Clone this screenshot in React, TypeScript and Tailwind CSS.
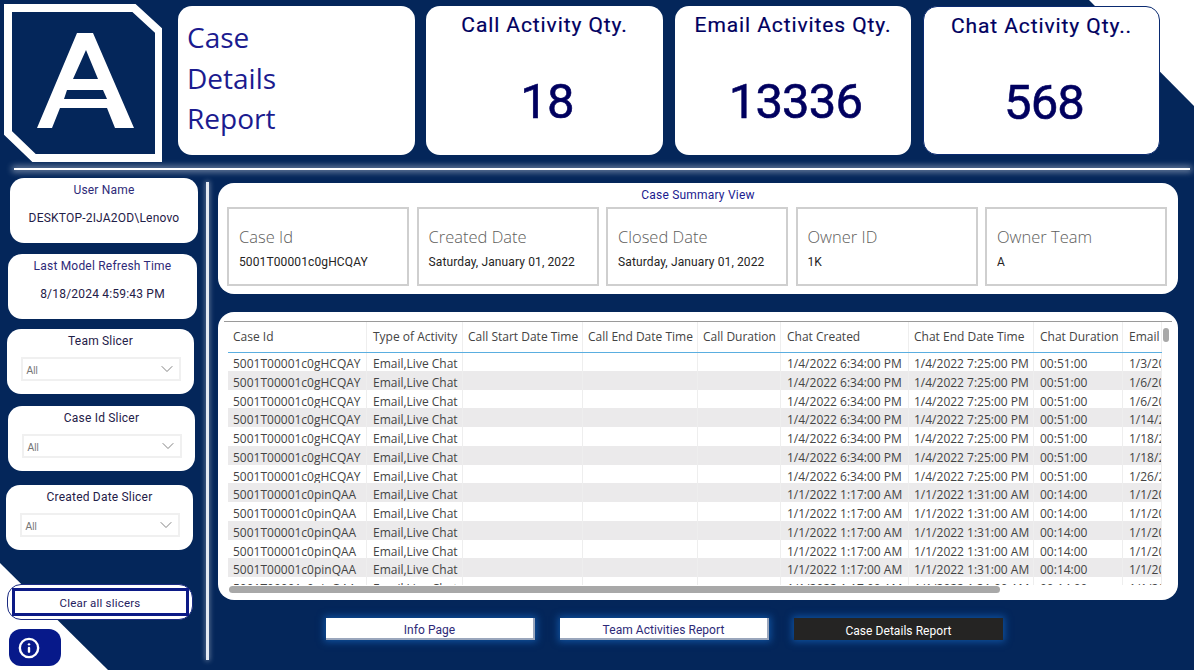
import { ChevronDown, Info } from 'lucide-react'

const din = "[font-family:Roboto,'Liberation_Sans',sans-serif]"
const seg = "[font-family:'Open_Sans','Noto_Sans',sans-serif]"

const columns = [
  { name: 'Case Id', w: 'w-[139px]', pl: 'pl-[5px]' },
  { name: 'Type of Activity', w: 'w-[96px]', pl: 'pl-[6px]' },
  { name: 'Call Start Date Time', w: 'w-[120px]', pl: 'pl-[5px]' },
  { name: 'Call End Date Time', w: 'w-[115px]', pl: 'pl-[5px]' },
  { name: 'Call Duration', w: 'w-[83px]', pl: 'pl-[5px]' },
  { name: 'Chat Created', w: 'w-[128px]', pl: 'pl-[6px]' },
  { name: 'Chat End Date Time', w: 'w-[125px]', pl: 'pl-[5px]' },
  { name: 'Chat Duration', w: 'w-[89px]', pl: 'pl-[6px]' },
  { name: 'Email', w: 'w-[39px]', pl: 'pl-[6px]' },
]

const first = ['1/3/2022', '1/6/2022', '1/6/2022', '1/14/2022', '1/18/2022', '1/18/2022', '1/26/2022']
const rows = [
  ...first.map(email => ['5001T00001c0gHCQAY', 'Email,Live Chat', '', '', '', '1/4/2022 6:34:00 PM', '1/4/2022 7:25:00 PM', '00:51:00', email]),
  ...Array.from({ length: 6 }, () => ['5001T00001c0pinQAA', 'Email,Live Chat', '', '', '', '1/1/2022 1:17:00 AM', '1/1/2022 1:31:00 AM', '00:14:00', '1/1/2022']),
]

const stats = [
  { title: 'Call Activity Qty.', value: '18', box: 'w-[237px]' },
  { title: 'Email Activites Qty.', value: '13336', box: 'w-[236px]' },
  { title: 'Chat Activity Qty..', value: '568', box: 'w-[237px] border border-[#0a2a70]' },
]

const summary = [
  { label: 'Case Id', value: '5001T00001c0gHCQAY' },
  { label: 'Created Date', value: 'Saturday, January 01, 2022' },
  { label: 'Closed Date', value: 'Saturday, January 01, 2022' },
  { label: 'Owner ID', value: '1K' },
  { label: 'Owner Team', value: 'A' },
]

function Logo() {
  return (
    <svg width="160" height="160" viewBox="0 0 160 160" className="shrink-0">
      <polygon points="6,6 132,6 157,29 157,156 32,156 6,131" fill="none" stroke="#fff" strokeWidth="8" />
      <path
        fillRule="evenodd"
        fill="#fff"
        d="M75 31 L91 31 L132 126 L113 126 L105 106 L58 106 L50 126 L35 126 Z M84 48 L71 77 L96 77 Z M65 88 L62 97 L105 97 L101 88 Z"
      />
    </svg>
  )
}

function InfoCard({ label, value, className }: { label: string; value: string; className: string }) {
  return (
    <div className={`${din} h-[65px] bg-white rounded-[14px] flex flex-col items-center pt-[4px] ${className}`}>
      <div className="text-[12px] leading-[16px] tracking-[0.2px] text-[#2e2a78]">{label}</div>
      <div className="text-[12px] leading-[16px] tracking-[0.2px] text-[#1f2048] mt-[12px]">{value}</div>
    </div>
  )
}

function Slicer({ label, className }: { label: string; className: string }) {
  return (
    <div className={`${din} h-[65px] bg-white rounded-[14px] flex flex-col items-center pt-[4px] ${className}`}>
      <div className="text-[12px] leading-[16px] tracking-[0.2px] text-[#1f2048]">{label}</div>
      <div className="w-[160px] h-[24px] mt-[8px] border-2 border-[#f0f0f0] flex items-center justify-between pl-[4px] pr-[2px]">
        <span className="[font-family:'Liberation_Sans',sans-serif] text-[10px] pt-[2px] text-[#777]">All</span>
        <ChevronDown size={20} strokeWidth={1.1} className="text-[#777]" />
      </div>
    </div>
  )
}

function NavButton({ label, active }: { label: string; active?: boolean }) {
  return (
    <div
      className={`${din} w-[209px] h-[22px] pt-[4px] flex items-center justify-center text-[12px] tracking-[0.05px] shadow-[0_0_7px_2px_#0f4f9c] ${
        active ? 'bg-[#252423] text-white' : 'bg-white text-[#2e2a78] border-r-2 border-b-2 border-[#9aa6bc]'
      }`}
    >
      {label}
    </div>
  )
}

export default function App() {
  return (
    <div className="relative w-[1194px] h-[670px] overflow-hidden bg-[#04265a]">
      {/* corner triangles behind everything */}
      <div className="absolute inset-0 bg-white [clip-path:polygon(1089px_0,1194px_0,1194px_106px)]" />
      <div className="absolute inset-0 bg-white [clip-path:polygon(0_563px,108px_670px,0_670px)]" />

      <div className="relative flex flex-col">
        {/* Top row */}
        <div className="flex h-[162px]">
          <div className="ml-[2px] mt-[2px]">
            <Logo />
          </div>
          <div className="ml-[16px] mt-[6px] w-[237px] h-[149px] bg-white rounded-[14px] pl-[9px] pt-[11px] text-[28px] leading-[40.5px] text-[#1b1b8f] [font-family:'Open_Sans',sans-serif]">
            <div>Case</div>
            <div>Details</div>
            <div>Report</div>
          </div>
          <div className="ml-[11px] mt-[6px] flex gap-[12px]">
            {stats.map(s => (
              <div key={s.title} className={`${din} ${s.box} h-[149px] bg-white rounded-[14px] flex flex-col items-center text-[#00005f]`}>
                <div className="mt-[4px] text-[21px] leading-[30px] tracking-[0.9px] [-webkit-text-stroke:0.2px_#00005f]">{s.title}</div>
                <div className="mt-[32px] pl-[5px] text-[49px] leading-[60px] tracking-[-0.8px] [-webkit-text-stroke:0.6px_#00005f]">{s.value}</div>
              </div>
            ))}
          </div>
        </div>

        <div className="ml-[14px] mt-[6px] w-[1176px] h-[2px] bg-white shadow-[0_0_6px_2px_rgba(255,255,255,0.45)]" />

        {/* Main area */}
        <div className="flex mt-[8px]">
          <div className="w-[198px] flex flex-col shrink-0">
            <InfoCard label="User Name" value="DESKTOP-2IJA2OD\Lenovo" className="ml-[10px] w-[188px]" />
            <InfoCard label="Last Model Refresh Time" value="8/18/2024 4:59:43 PM" className="ml-[8px] w-[189px] mt-[11px]" />
            <Slicer label="Team Slicer" className="ml-[7px] w-[187px] mt-[10px]" />
            <Slicer label="Case Id Slicer" className="ml-[8px] w-[187px] mt-[12px]" />
            <Slicer label="Created Date Slicer" className="ml-[6px] w-[187px] mt-[14px]" />
            <div className="ml-[7px] mt-[34px] w-[186px] h-[36px] bg-white rounded-[14px] border border-[#1a2a80] flex items-center justify-center">
              <div className={`${din} w-[177px] h-[28px] pt-[4px] border-[3px] border-[#0c1a86] flex items-center justify-center text-[11.5px] tracking-[0.2px] text-[#1f2060]`}>
                Clear all slicers
              </div>
            </div>
            <div className="ml-[9px] mt-[9px] w-[52px] h-[37px] rounded-[12px] bg-[#07198a] flex items-center pl-[9px] pt-[1px]">
              <Info size={22} strokeWidth={2.6} className="text-white" />
            </div>
          </div>

          <div className="ml-[8px] mt-[4px] w-[3px] h-[478px] bg-[#e4e9f2] shadow-[0_0_5px_1px_rgba(255,255,255,0.35)] shrink-0" />

          <div className="ml-[9px] w-[960px] flex flex-col">
            {/* Case summary */}
            <div className="mt-[5px] h-[111px] bg-white rounded-[16px] relative">
              <div className={`${din} h-[24px] pt-[5px] text-center text-[12px] leading-[14px] tracking-[0.2px] text-[#1b1b8f]`}>Case Summary View</div>
              <div className="flex gap-[7.5px] pl-[9px]">
                {summary.map(b => (
                  <div key={b.label} className="w-[182px] h-[79px] border-2 border-[#cfcfcf] flex flex-col pl-[10px] pt-[17px]">
                    <div className={`${seg} font-light text-[16.5px] leading-[22px] text-[#605e5c]`}>{b.label}</div>
                    <div className="[font-family:Roboto,sans-serif] text-[12px] leading-[16px] tracking-[0.12px] mt-[6px] text-[#252423]">{b.value}</div>
                  </div>
                ))}
              </div>
            </div>

            {/* Detail table */}
            <div className="mt-[18px] h-[288px] bg-white rounded-[16px] relative pt-[9px]">
              <div className="mx-[6px] h-px bg-[#9a9a9a]" />
              <div className="ml-[10px] w-[934px] h-[263px] overflow-hidden">
                <div className="relative z-10 -mb-px flex h-[31px] border-b border-[#5aaee0]">
                  {columns.map(c => (
                    <div key={c.name} className={`${c.w} ${seg} ${c.pl} shrink-0 border-r border-[#eeeeee] text-[12px] leading-[30px] text-[#444] whitespace-nowrap overflow-hidden`}>
                      {c.name}
                    </div>
                  ))}
                </div>
                {rows.map((row, i) => (
                  <div key={i} className={`flex h-[18.75px] ${i % 2 === 1 ? 'bg-[#ebeaeb]' : 'bg-white'}`}>
                    {row.map((cell, j) => (
                      <div key={j} className={`${columns[j].w} ${seg} ${columns[j].pl} shrink-0 border-r border-[#eeeeee] pt-[3px] text-[12px] leading-[18.75px] text-[#444] whitespace-nowrap overflow-hidden`}>
                        {cell}
                      </div>
                    ))}
                  </div>
                ))}
              </div>
              <div className="absolute left-[11px] top-[274px] w-[771px] h-[7px] rounded-full bg-[#a8a8a8]" />
              <div className="absolute left-[945px] top-[16px] w-[6px] h-[14px] rounded-full bg-[#a8a8a8]" />
            </div>

            {/* Page nav */}
            <div className="mt-[18px] pl-[108px] flex gap-[25px]">
              <NavButton label="Info Page" />
              <NavButton label="Team Activities Report" />
              <NavButton label="Case Details Report" active />
            </div>
          </div>
        </div>
      </div>
    </div>
  )
}
